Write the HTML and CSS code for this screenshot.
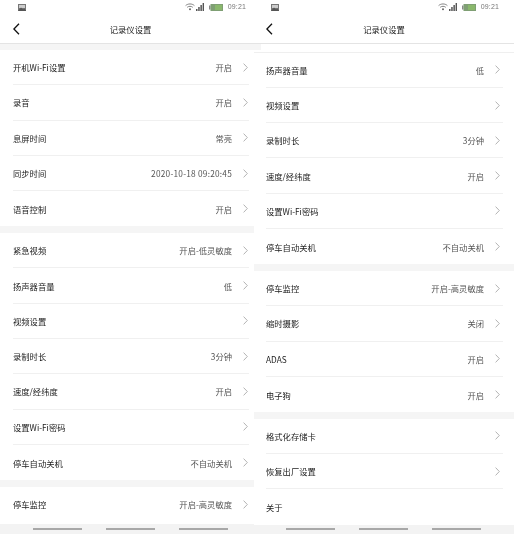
FILE: index.html
```html
<!DOCTYPE html>
<html lang="zh">
<head>
<meta charset="utf-8">
<title>记录仪设置</title>
<link rel="stylesheet" href="styles.css">
</head>
<body>
<svg class="defs" width="0" height="0" aria-hidden="true">
  <symbol id="chev" viewBox="0 0 5 9"><path d="M.6.6 4.3 4.5.6 8.4" fill="none" stroke="#a0a0a0" stroke-width=".8"/></symbol>
  <symbol id="back" viewBox="0 0 7 12"><path d="M6 .7.9 6 6 11.3" fill="none" stroke="#111" stroke-width="1.3"/></symbol>
  <symbol id="pic" viewBox="0 0 8 7"><rect width="8" height="7" fill="#777"/><rect x="1" y="1" width="6" height="3" fill="#ccc"/><path d="M0 7 3 3.5 5 5.5 6.200 4.500 8 6.500V7Z" fill="#555"/></symbol>
  <symbol id="wifi" viewBox="0 0 10 8"><path d="M.6 2.600C3 .4 7 .4 9.400 2.600M2.200 4.300C3.800 3 6.200 3 7.800 4.300" fill="none" stroke="#666" stroke-width=".8"/><circle cx="5" cy="6.300" r="1" fill="#666"/></symbol>
  <symbol id="signal" viewBox="0 0 8 8"><path d="M0 8V6h1.500v2ZM2.200 8V4h1.500v4ZM4.400 8V2h1.500v6ZM6.600 8V0H8v8Z" fill="#555"/></symbol>
  <symbol id="batt" viewBox="0 0 14 7"><rect x="0" y="1.500" width="1.500" height="4" fill="#888"/><rect x="1.500" width="12.500" height="7" fill="#7f9f74"/><rect x="6" y="1" width="7" height="5" fill="#8ab86c"/></symbol>
</svg>
<main class="screens">
  <section class="phone phone-a">
    <div class="status">
      <svg class="pic"><use href="#pic"/></svg>
      <div class="status-right">
        <svg class="wifi"><use href="#wifi"/></svg>
        <svg class="signal"><use href="#signal"/></svg>
        <svg class="batt"><use href="#batt"/></svg>
        <span class="time">09:21</span>
      </div>
    </div>
    <header class="bar">
      <svg class="back"><use href="#back"/></svg>
      <h1 class="title">记录仪设置</h1>
    </header>
    <div class="band band-top"></div>
    <div class="group">
      <div class="row"><span class="label">开机Wi-Fi设置</span><span class="value">开启</span><svg class="chev"><use href="#chev"/></svg></div>
      <div class="row"><span class="label">录音</span><span class="value">开启</span><svg class="chev"><use href="#chev"/></svg></div>
      <div class="row"><span class="label">息屏时间</span><span class="value">常亮</span><svg class="chev"><use href="#chev"/></svg></div>
      <div class="row"><span class="label">同步时间</span><span class="value date">2020-10-18 09:20:45</span><svg class="chev"><use href="#chev"/></svg></div>
      <div class="row"><span class="label">语音控制</span><span class="value">开启</span><svg class="chev"><use href="#chev"/></svg></div>
    </div>
    <div class="band"></div>
    <div class="group">
      <div class="row"><span class="label">紧急视频</span><span class="value">开启-低灵敏度</span><svg class="chev"><use href="#chev"/></svg></div>
      <div class="row"><span class="label">扬声器音量</span><span class="value">低</span><svg class="chev"><use href="#chev"/></svg></div>
      <div class="row"><span class="label">视频设置</span><svg class="chev"><use href="#chev"/></svg></div>
      <div class="row"><span class="label">录制时长</span><span class="value">3分钟</span><svg class="chev"><use href="#chev"/></svg></div>
      <div class="row"><span class="label">速度/经纬度</span><span class="value">开启</span><svg class="chev"><use href="#chev"/></svg></div>
      <div class="row"><span class="label">设置Wi-Fi密码</span><svg class="chev"><use href="#chev"/></svg></div>
      <div class="row"><span class="label">停车自动关机</span><span class="value">不自动关机</span><svg class="chev"><use href="#chev"/></svg></div>
    </div>
    <div class="band"></div>
    <div class="group">
      <div class="row"><span class="label">停车监控</span><span class="value">开启-高灵敏度</span><svg class="chev"><use href="#chev"/></svg></div>
    </div>
    <nav class="softkeys"><i></i><i></i><i></i></nav>
  </section>

  <section class="phone phone-b">
    <div class="status">
      <svg class="pic"><use href="#pic"/></svg>
      <div class="status-right">
        <svg class="wifi"><use href="#wifi"/></svg>
        <svg class="signal"><use href="#signal"/></svg>
        <svg class="batt"><use href="#batt"/></svg>
        <span class="time">09:21</span>
      </div>
    </div>
    <header class="bar">
      <svg class="back"><use href="#back"/></svg>
      <h1 class="title">记录仪设置</h1>
    </header>
    <div class="spacer"></div>
    <div class="group">
      <div class="row"><span class="label">扬声器音量</span><span class="value">低</span><svg class="chev"><use href="#chev"/></svg></div>
      <div class="row"><span class="label">视频设置</span><svg class="chev"><use href="#chev"/></svg></div>
      <div class="row"><span class="label">录制时长</span><span class="value">3分钟</span><svg class="chev"><use href="#chev"/></svg></div>
      <div class="row"><span class="label">速度/经纬度</span><span class="value">开启</span><svg class="chev"><use href="#chev"/></svg></div>
      <div class="row"><span class="label">设置Wi-Fi密码</span><svg class="chev"><use href="#chev"/></svg></div>
      <div class="row"><span class="label">停车自动关机</span><span class="value">不自动关机</span><svg class="chev"><use href="#chev"/></svg></div>
    </div>
    <div class="band"></div>
    <div class="group">
      <div class="row"><span class="label">停车监控</span><span class="value">开启-高灵敏度</span><svg class="chev"><use href="#chev"/></svg></div>
      <div class="row"><span class="label">缩时摄影</span><span class="value">关闭</span><svg class="chev"><use href="#chev"/></svg></div>
      <div class="row"><span class="label">ADAS</span><span class="value">开启</span><svg class="chev"><use href="#chev"/></svg></div>
      <div class="row"><span class="label">电子狗</span><span class="value">开启</span><svg class="chev"><use href="#chev"/></svg></div>
    </div>
    <div class="band"></div>
    <div class="group">
      <div class="row"><span class="label">格式化存储卡</span><svg class="chev"><use href="#chev"/></svg></div>
      <div class="row"><span class="label">恢复出厂设置</span><svg class="chev"><use href="#chev"/></svg></div>
      <div class="row"><span class="label">关于</span></div>
    </div>
    <nav class="softkeys"><i></i><i></i><i></i></nav>
  </section>
</main>
</body>
</html>
```

FILE: styles.css
```css
* { box-sizing: border-box; }
html, body { margin: 0; padding: 0; background: #fff; }
body {
  width: 520px;
  height: 534px;
  overflow: hidden;
  font-family: "Noto Sans CJK SC", "Liberation Sans", sans-serif;
  color: #222;
}
.defs { display: block; height: 0; }
.screens { display: flex; height: 534px; align-items: stretch; filter: blur(.25px); }
.phone {
  display: flex;
  flex-direction: column;
  height: 534px;
  flex: none;
}
.phone-a { width: 254px; --pad-l: 13px; --div-r: 5px; --chev-r: 6px; --sb-l: 18px; --bar-w: 261px; --nav-l: 33px; }
.phone-b { width: 260px; --pad-l: 12px; --div-r: 11px; --chev-r: 14px; --sb-l: 17px; --bar-w: 260px; --nav-l: 32px; }

.status {
  flex: none;
  width: var(--bar-w);
  height: 17px;
  display: flex;
  align-items: center;
  justify-content: space-between;
  padding: 0 15px 3px var(--sb-l);
}
.pic { width: 8px; height: 7px; }
.status-right { display: flex; align-items: center; }
.wifi { width: 10px; height: 8px; margin-right: 1px; }
.signal { width: 8px; height: 8px; margin-right: 5px; }
.batt { width: 14px; height: 7px; margin-right: 5px; }
.time { font-size: 7px; line-height: 8px; color: #777; letter-spacing: .15px; font-family: "Liberation Sans", sans-serif; }

.bar {
  flex: none;
  width: var(--bar-w);
  height: 27px;
  display: flex;
  align-items: center;
  justify-content: center;
  position: relative;
  padding-bottom: 2px;
  border-bottom: 1px solid #e4e4e4;
}
.back { width: 7px; height: 12px; position: absolute; left: var(--pad-l); top: 6px; }
.title { margin: 0; font-size: 8.3px; line-height: 12px; font-weight: 400; color: #222; }

.band { flex: none; height: 6.6px; background: #f5f5f5; }
.band-top { width: var(--bar-w); height: 6px; }
.spacer { flex: none; height: 8.6px; border-bottom: 1px solid #efefef; }
.group { flex: none; }
.row {
  height: 35.3px;
  margin: 0 var(--div-r) 0 var(--pad-l);
  display: flex;
  align-items: center;
  border-bottom: 1px solid #f0f0f0;
  font-size: 8.3px;
  line-height: 12px;
}
.group .row:last-child { border-bottom: 0; }
.label { flex: 1; color: #222; }
.value { color: #555; margin-right: 11px; }
.date { letter-spacing: .22px; }
.chev { width: 5px; height: 9px; margin-right: calc(var(--chev-r) - var(--div-r)); flex: none; }

.softkeys {
  margin-top: auto;
  flex: none;
  height: 10px;
  background: #f3f3f3;
  display: flex;
  gap: 24.5px;
  padding: 3.5px 0 0 var(--nav-l);
}
.softkeys i { display: block; width: 48.5px; height: 2px; background: #a8a8a8; }
```
